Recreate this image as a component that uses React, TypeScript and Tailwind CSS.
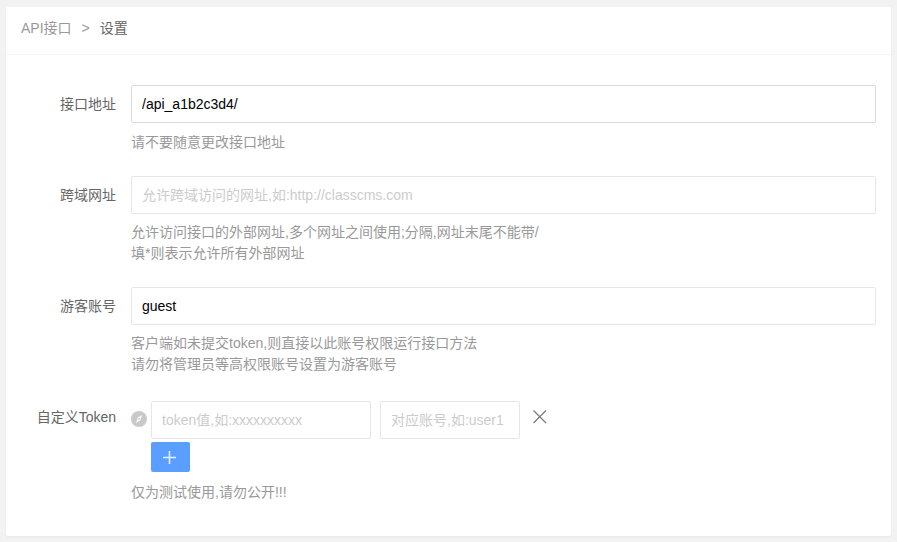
const font = "[font-family:'Liberation_Sans','Noto_Sans_CJK_SC',sans-serif]";

function Label({ children }: { children: React.ReactNode }) {
  return <label className="w-[110px] shrink-0 text-right text-sm leading-[38px] text-[#666]">{children}</label>;
}

function Field({ value, placeholder, className }: { value?: string; placeholder: string; className: string }) {
  return (
    <input
      readOnly
      value={value ?? ""}
      placeholder={placeholder}
      className={`h-[38px] rounded-[2px] border bg-white pl-[10px] text-sm text-black outline-none placeholder:text-[#ccc] ${className}`}
    />
  );
}

function Help({ lines, className }: { lines: string[]; className: string }) {
  return (
    <div className={`text-sm leading-[21px] text-[#999] ${className}`}>
      {lines.map((line) => (
        <div key={line}>{line}</div>
      ))}
    </div>
  );
}

export default function App() {
  return (
    <div className={`${font} min-h-[542px] bg-[#f2f2f2] px-[6px] pt-[7px] pb-[6px]`}>
      <div className="h-[529px] rounded-[2px] bg-white shadow-[0_1px_2px_0_rgba(0,0,0,0.05)]">
        <div className="flex h-[48px] items-center gap-[10px] border-b border-[#f6f6f6] pb-[6px] pl-[15px] text-sm text-[#999]">
          <span>API接口</span>
          <span>&gt;</span>
          <span className="text-[#666]">设置</span>
        </div>

        <div className="pt-[30px] pr-[15px]">
          <div className="flex gap-[15px]">
            <Label>接口地址</Label>
            <div className="flex-1">
              <Field value="/api_a1b2c3d4/" placeholder="" className="w-full border-[#dadada]" />
              <Help lines={["请不要随意更改接口地址"]} className="mt-[9px]" />
            </div>
          </div>

          <div className="mt-[23px] flex gap-[15px]">
            <Label>跨域网址</Label>
            <div className="flex-1">
              <Field placeholder="允许跨域访问的网址,如:http://classcms.com" className="w-full border-[#e6e6e6]" />
              <Help lines={["允许访问接口的外部网址,多个网址之间使用;分隔,网址末尾不能带/", "填*则表示允许所有外部网址"]} className="mt-[8px]" />
            </div>
          </div>

          <div className="mt-[23px] flex gap-[15px]">
            <Label>游客账号</Label>
            <div className="flex-1">
              <Field value="guest" placeholder="" className="w-full border-[#e6e6e6]" />
              <Help lines={["客户端如未提交token,则直接以此账号权限运行接口方法", "请勿将管理员等高权限账号设置为游客账号"]} className="mt-[8px]" />
            </div>
          </div>

          <div className="mt-[26px] flex gap-[15px]">
            <label className="w-[110px] shrink-0 text-right text-sm leading-[32px] text-[#666]">自定义Token</label>
            <div className="flex-1">
              <div className="flex items-start">
                <svg className="mt-[10px] h-4 w-4" viewBox="0 0 16 16">
                  <circle cx="8" cy="8" r="8" fill="#c9c9c9" />
                  <path d="M11 4 9.3 9.3 5 12 6.7 6.7Z" fill="#fff" />
                  <circle cx="8" cy="8" r="0.9" fill="#c9c9c9" />
                </svg>
                <Field placeholder="token值,如:xxxxxxxxxx" className="ml-[4px] w-[220px] border-[#e6e6e6]" />
                <Field placeholder="对应账号,如:user1" className="ml-[9px] w-[140px] border-[#e6e6e6]" />
                <svg className="mt-[9px] ml-[13px] h-[14px] w-[14px]" viewBox="0 0 14 14">
                  <path d="M0.5 0.5 13 13M13 0.5 0.5 13" stroke="#777" strokeWidth="1.2" fill="none" />
                </svg>
              </div>
              <button className="mt-[3px] ml-[20px] flex h-[30px] w-[39px] items-center justify-center rounded-[2px] bg-[#5a9eff] pr-[2px]">
                <svg className="h-[13px] w-[13px]" viewBox="0 0 13 13">
                  <path d="M6.5 0V13M0 6.5H13" stroke="#fff" strokeOpacity="0.85" strokeWidth="1.6" fill="none" />
                </svg>
              </button>
              <Help lines={["仅为测试使用,请勿公开!!!"]} className="mt-[10px]" />
            </div>
          </div>
        </div>
      </div>
    </div>
  );
}
